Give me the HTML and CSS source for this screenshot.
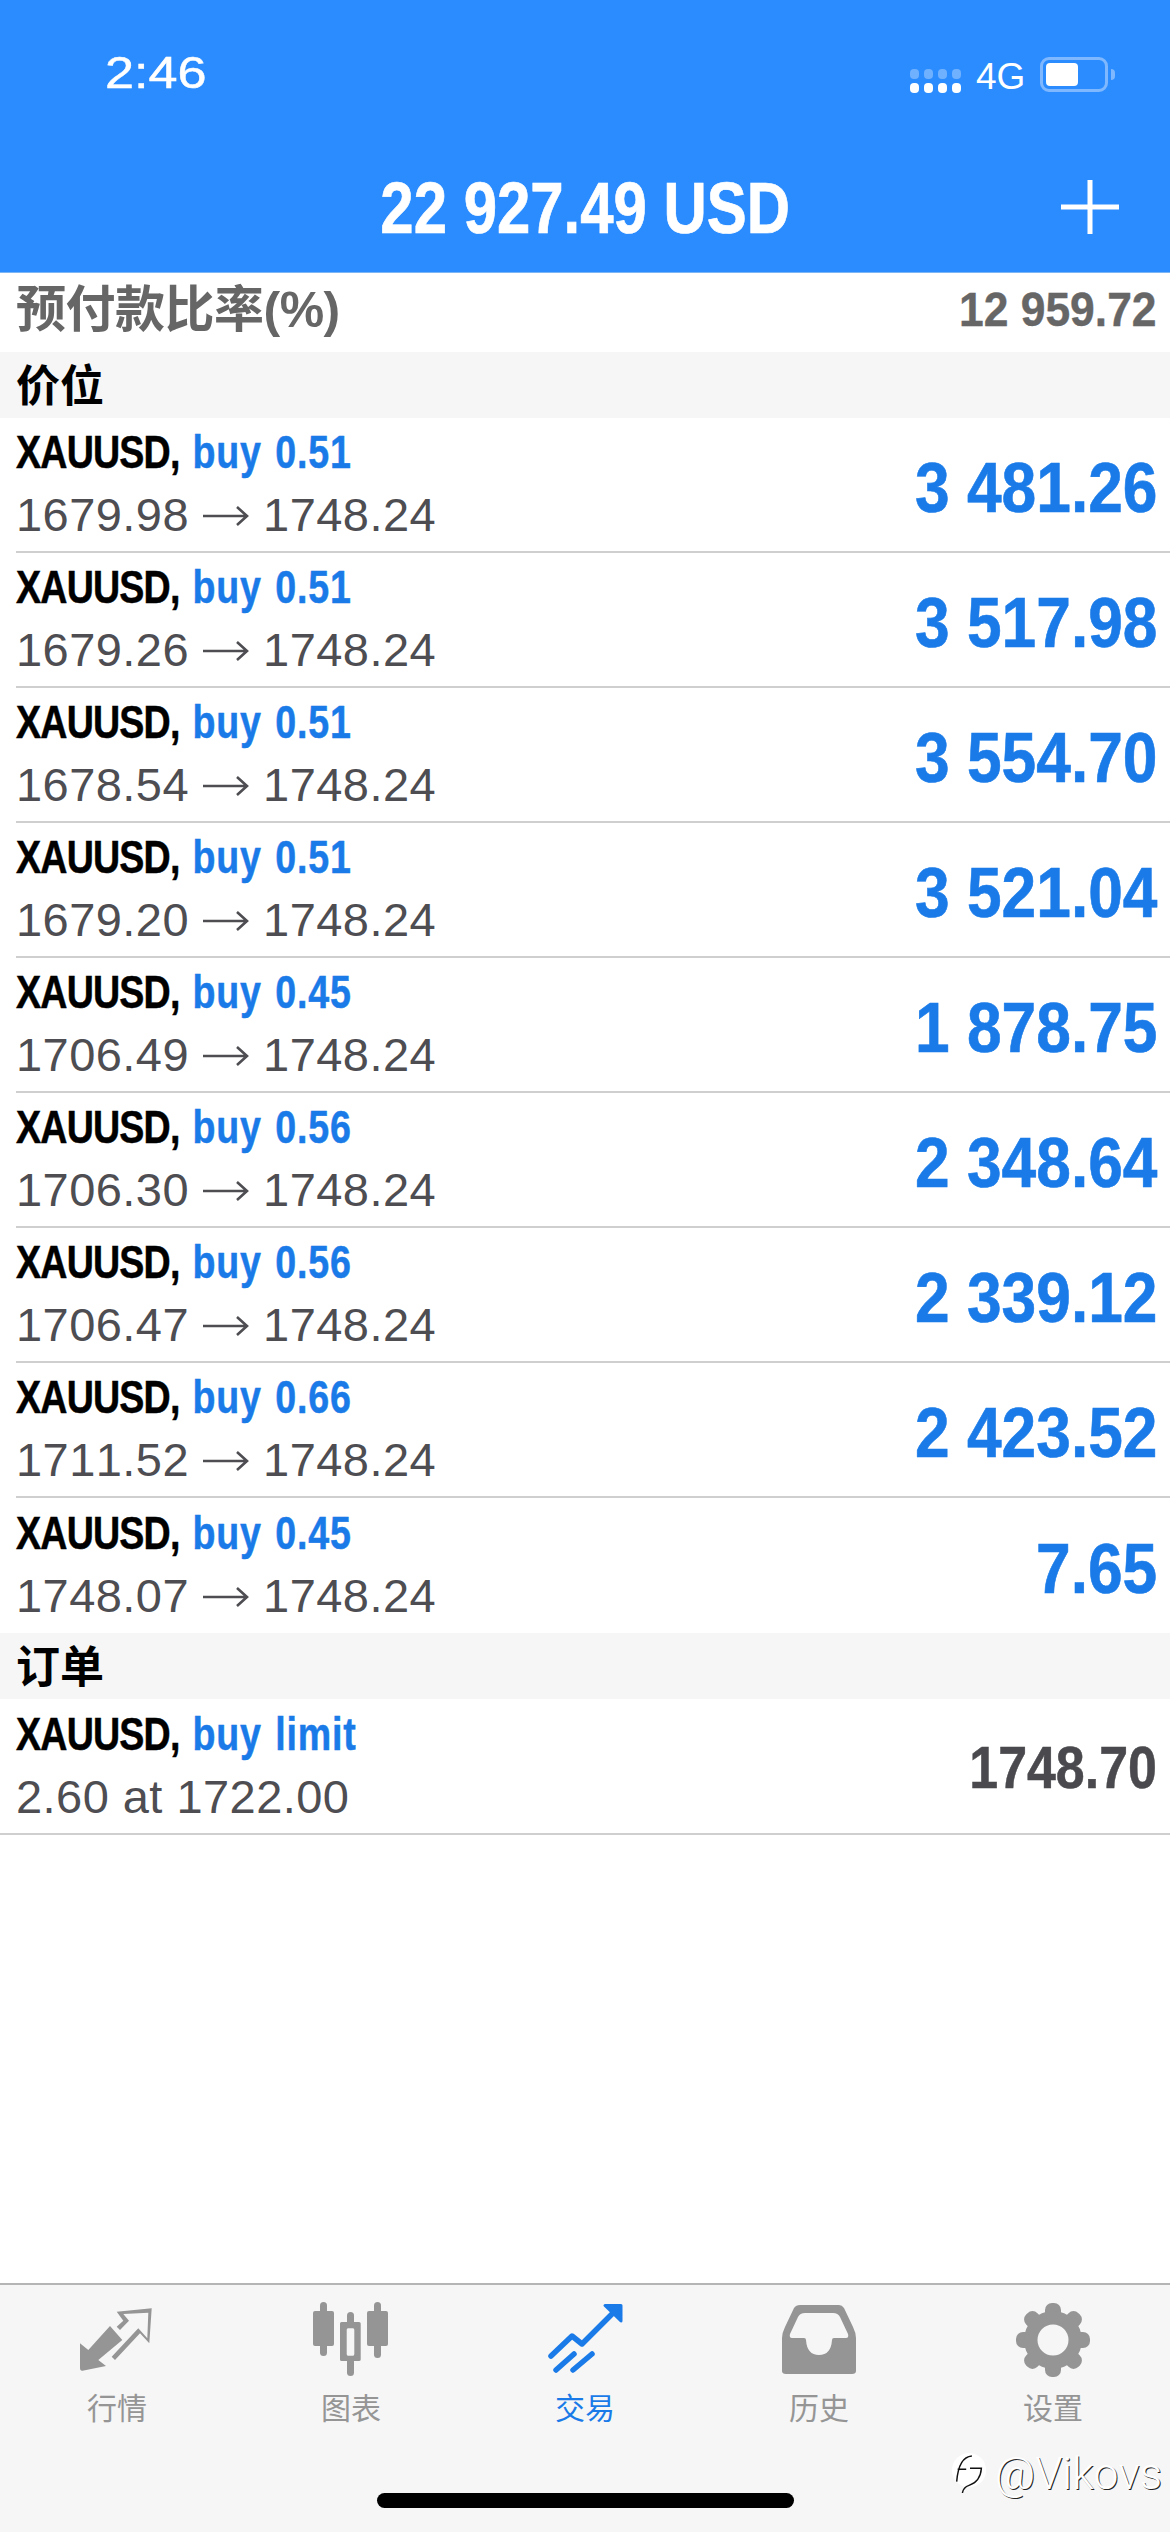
FILE: index.html
```html
<!DOCTYPE html>
<html lang="zh">
<head>
<meta charset="utf-8">
<title>交易</title>
<link rel="stylesheet" href="styles.css">
</head>
<body>
<svg class="defs" width="0" height="0"><defs><symbol id="arrow" viewBox="0 0 46 24"><path d="M0 12H44M34 3L44 12L34 21" fill="none" stroke="#4d4d52" stroke-width="2.600"/></symbol></defs></svg>
<div class="screen">
  <header class="header">
    <div class="status">
      <span class="clock">2:46</span>
      <div class="status-right">
        <div class="signal"><i class="dim"></i><i class="dim"></i><i class="dim"></i><i class="dim"></i><i></i><i></i><i></i><i></i></div>
        <span class="net">4G</span>
        <div class="battery"><div class="battery-fill"></div></div>
        <div class="battery-nub"></div>
      </div>
    </div>
    <div class="titlebar">
      <span></span>
      <span class="title">22 927.49 USD</span>
      <svg class="plus" viewBox="0 0 58 54" width="58" height="54"><path d="M29 0V54M0 27H58" stroke="#fff" stroke-width="5" fill="none"/></svg>
    </div>
  </header>
  <div class="metric">
    <span class="metric-label">预付款比率(%)</span>
    <span class="metric-value">12 959.72</span>
  </div>
  <div class="section">价位</div>
  <div class="row"><div class="info"><div class="line1"><b>XAUUSD,</b> <span class="side">buy 0.51</span></div><div class="line2"><span>1679.98</span><svg class="arrow"><use href="#arrow"/></svg><span>1748.24</span></div></div><span class="profit">3 481.26</span></div>
  <div class="row"><div class="info"><div class="line1"><b>XAUUSD,</b> <span class="side">buy 0.51</span></div><div class="line2"><span>1679.26</span><svg class="arrow"><use href="#arrow"/></svg><span>1748.24</span></div></div><span class="profit">3 517.98</span></div>
  <div class="row"><div class="info"><div class="line1"><b>XAUUSD,</b> <span class="side">buy 0.51</span></div><div class="line2"><span>1678.54</span><svg class="arrow"><use href="#arrow"/></svg><span>1748.24</span></div></div><span class="profit">3 554.70</span></div>
  <div class="row"><div class="info"><div class="line1"><b>XAUUSD,</b> <span class="side">buy 0.51</span></div><div class="line2"><span>1679.20</span><svg class="arrow"><use href="#arrow"/></svg><span>1748.24</span></div></div><span class="profit">3 521.04</span></div>
  <div class="row"><div class="info"><div class="line1"><b>XAUUSD,</b> <span class="side">buy 0.45</span></div><div class="line2"><span>1706.49</span><svg class="arrow"><use href="#arrow"/></svg><span>1748.24</span></div></div><span class="profit">1 878.75</span></div>
  <div class="row"><div class="info"><div class="line1"><b>XAUUSD,</b> <span class="side">buy 0.56</span></div><div class="line2"><span>1706.30</span><svg class="arrow"><use href="#arrow"/></svg><span>1748.24</span></div></div><span class="profit">2 348.64</span></div>
  <div class="row"><div class="info"><div class="line1"><b>XAUUSD,</b> <span class="side">buy 0.56</span></div><div class="line2"><span>1706.47</span><svg class="arrow"><use href="#arrow"/></svg><span>1748.24</span></div></div><span class="profit">2 339.12</span></div>
  <div class="row"><div class="info"><div class="line1"><b>XAUUSD,</b> <span class="side">buy 0.66</span></div><div class="line2"><span>1711.52</span><svg class="arrow"><use href="#arrow"/></svg><span>1748.24</span></div></div><span class="profit">2 423.52</span></div>
  <div class="row row-last"><div class="info"><div class="line1"><b>XAUUSD,</b> <span class="side">buy 0.45</span></div><div class="line2"><span>1748.07</span><svg class="arrow"><use href="#arrow"/></svg><span>1748.24</span></div></div><span class="profit">7.65</span></div>
  <div class="section">订单</div>
  <div class="row row-order"><div class="info"><div class="line1"><b>XAUUSD,</b> <span class="side">buy limit</span></div><div class="line2">2.60 at 1722.00</div></div><span class="order-price">1748.70</span></div>
  <div class="spacer"></div>
  <nav class="tabbar">
    <div class="tabs">
      <div class="tab">
        <svg class="tab-icon" viewBox="0 0 76 76" width="76" height="76">
          <path fill="#959595" d="M31 24L43.300 38L19.300 58L27 64L3.500 68.700Q1 69 1 66V41.300L9.300 48Z"/>
          <path fill="#959595" d="M37.700 9.700L72.700 6.300L70.300 41.300L61 31.300L36 58L32.700 54.700L59.300 26.300L68.300 36.300L69.300 10.700L44.300 12L50 18.700L41 28L37.700 24.700L44.300 18.700Z"/>
        </svg>
        <span class="tab-label">行情</span>
      </div>
      <div class="tab">
        <svg class="tab-icon" viewBox="0 0 76 76" width="76" height="76" fill="#959595">
          <rect x="7" y="0" width="7" height="54" rx="3.500"/>
          <rect x="0" y="9" width="21" height="35" rx="2"/>
          <rect x="34" y="10" width="7" height="14" rx="3.500"/>
          <rect x="34" y="56" width="7" height="18" rx="3.500"/>
          <path fill-rule="evenodd" d="M28.500 20H46Q47.700 20 47.700 21.500V57.500Q47.700 59 46 59H28.500Q27 59 27 57.500V21.500Q27 20 28.500 20ZM35 26.300Q33.700 26.300 33.700 28V52Q33.700 53.700 35 53.700H40Q41.300 53.700 41.300 52V28Q41.300 26.300 40 26.300Z"/>
          <rect x="61" y="0" width="7" height="56" rx="3.500"/>
          <rect x="54" y="9" width="21" height="35" rx="2"/>
        </svg>
        <span class="tab-label">图表</span>
      </div>
      <div class="tab active">
        <svg class="tab-icon" viewBox="0 0 76 76" width="76" height="76">
          <path fill="none" stroke="#1a7be8" stroke-width="5.500" stroke-linecap="round" stroke-linejoin="round" d="M4 54L25 34L35 42L66 11M9 68L27 52M26 68L45 52"/>
          <path fill="#1a7be8" stroke="#1a7be8" stroke-width="3" stroke-linejoin="round" d="M58 3.500H74V19Z"/>
        </svg>
        <span class="tab-label">交易</span>
      </div>
      <div class="tab">
        <svg class="tab-icon" viewBox="0 0 76 76" width="76" height="76">
          <path fill="#959595" fill-rule="evenodd" d="M19 3H58Q61 3 63 6L72 25Q75 31 75 36V69Q75 72 71 72H5Q1 72 1 69V36Q1 31 4 25L13 6Q15 3 19 3ZM24 11Q19 11 17 15L9 32Q8 36 11 36H23Q25 36 25 38Q26 53 38 53Q50 53 51 38Q51 36 53 36H65Q68 36 67 32L59 15Q57 11 52 11Z"/>
        </svg>
        <span class="tab-label">历史</span>
      </div>
      <div class="tab">
        <svg class="tab-icon" viewBox="0 0 76 76" width="76" height="76" fill="#959595">
          <g>
            <rect x="30" y="1" width="16" height="74" rx="7"/>
            <rect x="30" y="1" width="16" height="74" rx="7" transform="rotate(45 38 38)"/>
            <rect x="30" y="1" width="16" height="74" rx="7" transform="rotate(90 38 38)"/>
            <rect x="30" y="1" width="16" height="74" rx="7" transform="rotate(135 38 38)"/>
          </g>
          <circle cx="38" cy="38" r="29"/>
          <circle cx="38" cy="38" r="15.500" fill="#f6f6f6"/>
        </svg>
        <span class="tab-label">设置</span>
      </div>
    </div>
    <div class="home-indicator"></div>
    <div class="watermark">
      <svg viewBox="0 0 40 48" width="38" height="46"><circle cx="19" cy="20" r="18" fill="#fff"/><path d="M6 32Q8 6 22 5M7 19H16M20 18H32Q31 32 19 36Q13 38 12 44" fill="none" stroke="#111" stroke-width="1.500"/></svg>
      <span>@Vikovs</span>
    </div>
  </nav>
</div>
</body>
</html>
```
FILE: styles.css
```css
* { box-sizing: border-box; }
html, body { margin: 0; padding: 0; background: #fff; }
body { font-family: "Liberation Sans", "Noto Sans CJK SC", sans-serif; font-kerning: none; }
.defs { position: absolute; }
.screen { width: 1170px; height: 2532px; display: flex; flex-direction: column; overflow: hidden; }

.header { background: #2b8cff; color: #fff; height: 273px; flex: none; border-bottom: 1px solid #7cb6f5; }
.status { height: 141px; padding: 50px 55px 0 105px; display: flex; justify-content: space-between; align-items: flex-start; }
.clock { font-size: 45px; line-height: 46px; transform: scaleX(1.16); transform-origin: left center; -webkit-text-stroke: .5px #fff; }
.status-right { display: flex; align-items: flex-start; }
.signal { display: grid; grid-template-columns: repeat(4, 9px); grid-auto-rows: 10px; column-gap: 5px; row-gap: 4px; margin-top: 19px; }
.signal i { background: #fff; border-radius: 4px; }
.signal i.dim { background: #6fb0ff; }
.net { font-size: 37px; line-height: 37px; margin: 8px 0 0 15px; width: 64px; }
.battery { width: 68px; height: 35px; margin-top: 7px; border: 3px solid #7fb8ff; border-radius: 9px; padding: 3px; }
.battery-fill { width: 32px; height: 23px; background: #fff; border-radius: 4px; }
.battery-nub { width: 4px; height: 11px; margin: 19px 0 0 3px; background: #7fb8ff; border-radius: 0 4px 4px 0; }

.titlebar { height: 131px; display: grid; grid-template-columns: 1fr auto 1fr; align-items: center; padding-top: 2px; }
.title { font-size: 72px; font-weight: 700; line-height: 1; transform: scaleX(.832); -webkit-text-stroke: .7px #fff; }
.plus { justify-self: end; margin-right: 51px; margin-bottom: 2px; }

.metric { height: 79px; flex: none; display: flex; justify-content: space-between; align-items: center; padding: 0 13px 6px 16px; color: #666; font-weight: 700; background: #fff; }
.metric-label { font-size: 50px; line-height: 60px; letter-spacing: -.5px; }
.metric-value { font-size: 48px; line-height: 60px; transform: scaleX(.925); transform-origin: right center; -webkit-text-stroke: .4px #666; }

.section { height: 66px; flex: none; background: #f6f6f6; font-size: 44px; line-height: 70px; font-weight: 700; color: #000; padding-left: 16px; }

.row { height: 135px; flex: none; display: flex; justify-content: space-between; align-items: center; padding: 0 13px 0 0; margin-left: 16px; border-bottom: 2px solid #cfcfcf; }
.row-last { border-bottom: 0; }
.row-order { margin-left: 0; padding-left: 16px; height: 136px; }
.info { display: flex; flex-direction: column; padding-bottom: 3px; }
.line1 { font-size: 47px; line-height: 63px; font-weight: 700; white-space: nowrap; transform: scaleX(.8); transform-origin: left center; word-spacing: 3px; -webkit-text-stroke: .5px; }
.line1 b { color: #000; letter-spacing: -1px; }
.side { color: #1a7be8; letter-spacing: 1px; }
.line2 { font-size: 47px; line-height: 63px; letter-spacing: .45px; color: #4d4d52; white-space: nowrap; display: flex; align-items: center; }
.arrow { width: 46px; height: 24px; margin: 2px 14px 0 14px; }
.profit { font-size: 70px; font-weight: 700; line-height: 1; color: #1a7be8; transform: scaleX(.89); transform-origin: right center; padding-top: 6px; -webkit-text-stroke: .6px #1a7be8; }
.order-price { font-size: 60px; font-weight: 700; line-height: 1; color: #4a4a4e; transform: scaleX(.865); transform-origin: right center; padding-top: 4px; -webkit-text-stroke: .5px #4a4a4e; }

.spacer { flex: 1; }

.tabbar { height: 249px; flex: none; position: relative; background: #f6f6f6; border-top: 2px solid #b5b5b5; padding-top: 17px; }
.tabs { display: grid; grid-template-columns: repeat(5, 1fr); }
.tab { display: flex; flex-direction: column; align-items: center; color: #959595; }
.tab.active { color: #1a7be8; }
.tab-icon { display: block; }
.tab-label { font-size: 30px; line-height: 36px; margin-top: 10px; font-family: "Noto Sans CJK SC", sans-serif; }
.home-indicator { width: 417px; height: 15px; margin: 69px auto 0; background: #000; border-radius: 8px; }
.watermark { position: absolute; left: 951px; top: 165px; display: flex; align-items: center; gap: 6px; color: #fff; font-family: Roboto, sans-serif; font-size: 44px; font-weight: 300; line-height: 48px; text-shadow: 1px 1px 0 #222; }
```
